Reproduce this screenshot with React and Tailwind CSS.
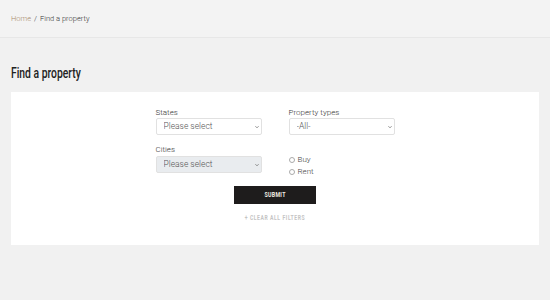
import React from 'react';

const Chevron = () => (
  <svg
    className="pointer-events-none absolute right-[3px] top-1/2 -translate-y-1/2"
    width="4"
    height="3"
    viewBox="0 0 10 6"
    fill="none"
    stroke="#666"
    strokeWidth="1.8"
  >
    <path d="M1 1l4 4 4-4" />
  </svg>
);

const Select = ({ value, disabled }) => (
  <div className="relative">
    <select
      disabled={disabled}
      defaultValue={value}
      className={`block h-[17px] w-full appearance-none rounded-[2px] border border-[#e1e1e1] pl-[7px] text-[8.5px] leading-none font-[350] text-[#555] outline-none ${
        disabled ? 'bg-[#e9ecef]' : 'bg-white'
      }`}
    >
      <option>{value}</option>
    </select>
    <Chevron />
  </div>
);

const Radio = ({ label }) => (
  <label className="flex items-center gap-[3px] text-[8px] leading-[11px] font-[350] text-[#444]">
    <span className="h-[6px] w-[6px] rounded-full border border-[#aaa] bg-white" />
    {label}
  </label>
);

export default function App() {
  return (
    <div className="min-h-[300px] bg-[#f1f1f1] font-['Roboto',sans-serif]">
      <div className="flex h-[38px] items-center border-b border-[#e7e7e7] bg-[#f3f3f3] px-[11px] text-[7.5px] font-[350] text-[#333]">
        <span className="text-[#a88a6c]">Home</span>
        <span className="mx-[3px]">/</span>
        <span>Find a property</span>
      </div>

      <div className="px-[11px]">
        <h1 className="pt-[27px] pb-[10px] text-[14px] leading-[17px]">
          <span className="inline-block origin-left scale-x-[0.74] font-medium text-[#222]">
            Find a property
          </span>
        </h1>

        <div className="bg-white pt-[15px] pb-[21px]">
          <div className="mx-auto grid w-[239px] grid-cols-2 gap-x-[27px]">
            <div>
              <div className="text-[8px] leading-[11px] font-[350] text-[#333]">States</div>
              <Select value="Please select" />
            </div>
            <div>
              <div className="text-[8px] leading-[11px] font-[350] text-[#333]">Property types</div>
              <Select value="-All-" />
            </div>
            <div className="pt-[9px]">
              <div className="mb-[1px] text-[8px] leading-[11px] font-[350] text-[#333]">Cities</div>
              <Select value="Please select" disabled />
            </div>
            <div className="flex flex-col gap-[1px] pt-[19px]">
              <Radio label="Buy" />
              <Radio label="Rent" />
            </div>
          </div>

          <div className="mt-[9px] flex flex-col items-center">
            <button className="flex h-[18px] w-[82px] items-center justify-center bg-[#1e1c1c] text-[7px] font-bold text-[#f3eee4]">
              <span className="inline-block scale-x-[0.75] tracking-[0.4px]">SUBMIT</span>
            </button>
            <div className="mt-[9px] text-[7px] font-bold text-[#c4c4c4]">
              <span className="inline-block scale-x-[0.72] tracking-[0.8px]">+ CLEAR ALL FILTERS</span>
            </div>
          </div>
        </div>
      </div>
    </div>
  );
}
